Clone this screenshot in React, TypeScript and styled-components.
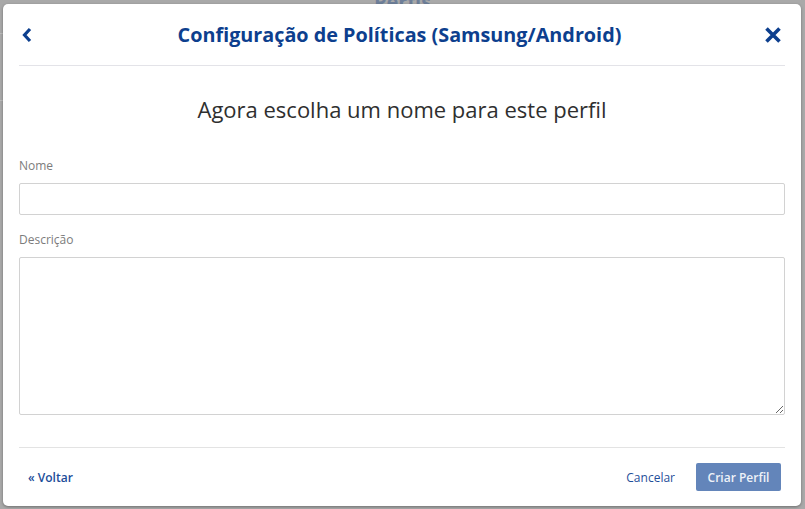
import React from "react";
import styled, { createGlobalStyle } from "styled-components";

const Global = createGlobalStyle`
  html, body { margin: 0; padding: 0; }
  body {
    background: #a9a9a9;
    font-family: "Open Sans", "Liberation Sans", sans-serif;
    width: 805px;
    height: 509px;
    overflow: hidden;
  }
  * { box-sizing: border-box; }
`;

const Page = styled.div`
  position: relative;
  width: 805px;
  height: 509px;
  padding: 4px 4px 3px 3px;
`;

const BehindTitle = styled.div`
  position: absolute;
  top: -12px;
  left: 0;
  right: 0;
  text-align: center;
  font-size: 20px;
  font-weight: 700;
  color: #6e7f99;
`;

const BehindLine = styled.div<{ $top: number }>`
  position: absolute;
  left: 0;
  width: 3px;
  top: ${(p) => p.$top}px;
  height: 1px;
  background: #bdbdbd;
`;

const Modal = styled.div`
  position: relative;
  width: 798px;
  height: 502px;
  background: #fff;
  border-radius: 5px;
  box-shadow: 0 1px 3px rgba(0, 0, 0, 0.35);
  padding: 0 16px;
  display: flex;
  flex-direction: column;
`;

const Header = styled.div`
  height: 62px;
  display: flex;
  align-items: center;
  justify-content: space-between;
  border-bottom: 1px solid #e3e3e8;
  padding: 0 3px 0 2px;
`;

const IconButton = styled.button`
  border: 0;
  background: none;
  padding: 0;
  display: flex;
  align-items: center;
  cursor: pointer;
`;

const Title = styled.h1`
  margin: 0 0 0 2px;
  font-size: 19.8px;
  font-weight: 700;
  color: #0d3f8e;
`;

const Body = styled.div`
  display: flex;
  flex-direction: column;
  border-bottom: 1px solid #e3e3e3;
  padding-bottom: 32px;
`;

const Subtitle = styled.h2`
  margin: 27px 0 0;
  text-align: center;
  font-size: 22px;
  font-weight: 400;
  color: #2f2f2f;
  line-height: 32px;
`;

const Label = styled.label`
  font-size: 12px;
  color: #7c7c7c;
  line-height: 16px;
`;

const Field = styled.div<{ $mt: number; $gap: number }>`
  display: flex;
  flex-direction: column;
  gap: ${(p) => p.$gap}px;
  margin-top: ${(p) => p.$mt}px;
`;

const Input = styled.input`
  height: 32px;
  border: 1px solid #d2d2d2;
  border-radius: 2px;
  font-family: inherit;
  font-size: 13px;
  padding: 0 8px;
  outline: none;
`;

const TextArea = styled.textarea`
  height: 158px;
  border: 1px solid #d2d2d2;
  border-radius: 2px;
  font-family: inherit;
  font-size: 13px;
  padding: 6px 8px;
  outline: none;
`;

const Footer = styled.div`
  flex: 1;
  display: flex;
  align-items: center;
  justify-content: space-between;
  padding: 0 4px 0 9px;
`;

const LinkButton = styled.button`
  border: 0;
  background: none;
  padding: 0;
  font-family: inherit;
  font-size: 12px;
  font-weight: 600;
  color: #1c4d99;
  cursor: pointer;
`;

const Actions = styled.div`
  display: flex;
  align-items: center;
  gap: 21px;
`;

const CancelLink = styled(LinkButton)`
  font-weight: 400;
  color: #1f4f9a;
`;

const Primary = styled.button`
  height: 28px;
  width: 85px;
  border: 0;
  border-radius: 2px;
  background: #6385ba;
  color: #eef2f8;
  font-family: inherit;
  font-size: 12px;
  font-weight: 600;
  cursor: pointer;
`;

export default function App() {
  return (
    <>
      <Global />
      <Page>
        <BehindTitle>Perfis</BehindTitle>
        <BehindLine $top={33} />
        <BehindLine $top={100} />
        <Modal>
          <Header>
            <IconButton aria-label="Voltar">
              <svg width="12" height="16" viewBox="0 0 12 16">
                <path d="M9 2 L3.5 8 L9 14" fill="none" stroke="#0d3f8e" strokeWidth="3.2" />
              </svg>
            </IconButton>
            <Title>Configuração de Políticas (Samsung/Android)</Title>
            <IconButton aria-label="Fechar">
              <svg width="18" height="18" viewBox="0 0 18 18">
                <path d="M2.5 2.5 L15.5 15.5 M15.5 2.5 L2.5 15.5" fill="none" stroke="#0d3f8e" strokeWidth="3.6" />
              </svg>
            </IconButton>
          </Header>
          <Body>
            <Subtitle>Agora escolha um nome para este perfil</Subtitle>
            <Field $mt={33} $gap={9}>
              <Label>Nome</Label>
              <Input />
            </Field>
            <Field $mt={17} $gap={9}>
              <Label>Descrição</Label>
              <TextArea />
            </Field>
          </Body>
          <Footer>
            <LinkButton>« Voltar</LinkButton>
            <Actions>
              <CancelLink>Cancelar</CancelLink>
              <Primary>Criar Perfil</Primary>
            </Actions>
          </Footer>
        </Modal>
      </Page>
    </>
  );
}
